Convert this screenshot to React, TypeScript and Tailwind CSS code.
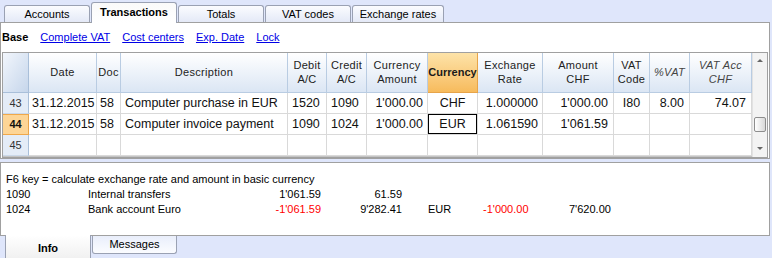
import React from 'react';

type Col = {
  w: number;
  head: string[];
  align: 'left' | 'right' | 'center';
  pad?: string;
  italic?: boolean;
  hot?: boolean;
};

const COLS: Col[] = [
  { w: 68, head: ['Date'], align: 'left', pad: 'pl-[3px]' },
  { w: 24, head: ['Doc'], align: 'left', pad: 'pl-[3px]' },
  { w: 167, head: ['Description'], align: 'left', pad: 'pl-[4px]' },
  { w: 39, head: ['Debit', 'A/C'], align: 'left', pad: 'pl-[4px]' },
  { w: 40, head: ['Credit', 'A/C'], align: 'left', pad: 'pl-[4px]' },
  { w: 61, head: ['Currency', 'Amount'], align: 'right', pad: 'pr-[4px]' },
  { w: 50, head: ['Currency'], align: 'center', hot: true },
  { w: 65, head: ['Exchange', 'Rate'], align: 'right', pad: 'pr-[4px]' },
  { w: 71, head: ['Amount', 'CHF'], align: 'right', pad: 'pr-[5px]' },
  { w: 36, head: ['VAT', 'Code'], align: 'center' },
  { w: 40, head: ['%VAT'], align: 'right', pad: 'pr-[5px]', italic: true },
  { w: 62, head: ['VAT Acc', 'CHF'], align: 'right', pad: 'pr-[5px]', italic: true },
];

const ROWS: { n: string; cur?: boolean; cells: string[] }[] = [
  { n: '43', cells: ['31.12.2015', '58', 'Computer purchase in EUR', '1520', '1090', "1'000.00", 'CHF', '1.000000', "1'000.00", 'I80', '8.00', '74.07'] },
  { n: '44', cur: true, cells: ['31.12.2015', '58', 'Computer invoice payment', '1090', '1024', "1'000.00", 'EUR', '1.061590', "1'061.59", '', '', ''] },
  { n: '45', cells: ['', '', '', '', '', '', '', '', '', '', '', ''] },
];

const TOP_TABS = ['Accounts', 'Transactions', 'Totals', 'VAT codes', 'Exchange rates'];

const alignClass = (a: Col['align']) =>
  a === 'left' ? 'justify-start' : a === 'right' ? 'justify-end' : 'justify-center';

function Scrollbar() {
  return (
    <div className="w-[15px] flex flex-col bg-[#f3f3f3] border-l border-[#e2e2e2]">
      <div className="h-[16px] flex items-center justify-center">
        <div className="w-0 h-0 border-x-[3px] border-x-transparent border-b-[3px] border-b-[#666]" />
      </div>
      <div className="h-[48px]" />
      <div className="h-[15px] mx-[1px] rounded-[2px] border border-[#8d8d8d] bg-gradient-to-r from-white to-[#d8d8d8]" />
      <div className="h-[10px]" />
      <div className="h-[14px] flex items-center justify-center">
        <div className="w-0 h-0 border-x-[3px] border-x-transparent border-t-[3px] border-t-[#666]" />
      </div>
    </div>
  );
}

function Table() {
  return (
    <div className="mx-px border border-[#a0a0a0] flex">
      <div className="flex flex-col border-b border-[#c4c4c4]">
        {/* header */}
        <div className="flex h-[40px]">
          <div className="w-[26px] border-r border-b border-[#a9bfd9] bg-gradient-to-br from-[#f2f6fc] to-[#c6d6eb]" />
          {COLS.map((c, i) => (
            <div
              key={i}
              style={{ width: c.w }}
              className={`shrink-0 overflow-hidden flex flex-col items-center justify-center text-center text-[11px] leading-[14px] tracking-[0.3px] whitespace-nowrap border-b ${
                c.hot
                  ? 'border-r border-[#e7a449] bg-gradient-to-b from-[#fde3a8] to-[#f7bb5c] font-bold text-[#1a1a1a] tracking-normal'
                  : 'border-r border-[#b9cce2] bg-gradient-to-b from-white to-[#dbe6f4] text-[#222]'
              } ${c.italic ? 'italic text-[#444]' : ''}`}
            >
              {c.head.map((h, j) => (
                <span key={j}>{h}</span>
              ))}
            </div>
          ))}
        </div>
        {/* body */}
        {ROWS.map((r) => (
          <div key={r.n} className="flex h-[21px]">
            <div
              className={`w-[26px] shrink-0 flex items-center justify-center text-[11px] border-r border-b ${
                r.cur
                  ? 'bg-[#fdd596] border-b-[#f0a84a] border-r-[#e9a449] font-bold text-[#111] border-t border-t-[#f0a84a]'
                  : 'bg-[#e4ecf7] border-r-[#a9bfd9] border-b-[#cbd8e8] text-[#333]'
              }`}
            >
              {r.n}
            </div>
            {COLS.map((c, i) => {
              const selected = r.cur && i === 6;
              return (
                <div
                  key={i}
                  style={{ width: c.w }}
                  className={`shrink-0 overflow-hidden whitespace-nowrap flex items-center text-[12.5px] text-[#111] border-r border-b border-[#d9d9d9] ${alignClass(
                    c.align,
                  )} ${c.pad ?? ''} ${selected ? 'shadow-[inset_0_0_0_1px_#000]' : ''}`}
                >
                  {r.cells[i]}
                </div>
              );
            })}
          </div>
        ))}
      </div>
      <Scrollbar />
    </div>
  );
}

function InfoLine({ cols }: { cols: { text: string; w?: number; right?: boolean; red?: boolean }[] }) {
  return (
    <div className="flex h-[15px] items-center whitespace-nowrap">
      {cols.map((c, i) => (
        <span
          key={i}
          style={c.w ? { width: c.w } : undefined}
          className={`shrink-0 ${c.right ? 'text-right' : ''} ${c.red ? 'text-[#ff0000]' : ''}`}
        >
          {c.text}
        </span>
      ))}
    </div>
  );
}

export default function App() {
  return (
    <div
      className="w-[772px] h-[258px] overflow-hidden bg-[#dfe6fb] flex flex-col text-black"
      style={{ fontFamily: '"Liberation Sans", Arial, sans-serif' }}
    >
      {/* top tabs */}
      <div className="h-[22px] flex items-end pl-[4px] gap-px">
        {TOP_TABS.map((t) => {
          const active = t === 'Transactions';
          return (
            <div
              key={t}
              className={`relative flex items-center justify-center text-[11px] border border-b-0 border-[#9aa1b3] rounded-t-[3px] ${
                t === 'Exchange rates' ? 'w-[92px]' : 'w-[86px]'
              } ${
                active
                  ? 'h-[21px] -mb-px z-10 bg-gradient-to-b from-[#fafafa] to-white font-bold pb-[2px]'
                  : 'h-[17px] pt-px bg-gradient-to-b from-[#fbfcff] to-[#e4e9f7]'
              }`}
            >
              {t}
            </div>
          );
        })}
      </div>

      {/* main panel */}
      <div className="h-[138px] mr-[2px] border border-[#a0a0a0] bg-white flex flex-col">
        <div className="h-[29px] flex items-center gap-[12px] px-[1px] text-[11px]">
          <span className="font-bold">Base</span>
          <span className="text-[#0000e6] underline">Complete VAT</span>
          <span className="text-[#0000e6] underline">Cost centers</span>
          <span className="text-[#0000e6] underline">Exp. Date</span>
          <span className="text-[#0000e6] underline">Lock</span>
        </div>
        <Table />
      </div>

      <div className="h-[3px]" />

      {/* info panel */}
      <div className="h-[74px] mr-[2px] border border-[#a0a0a0] bg-white pt-[8px] pl-[5px] text-[11px]">
        <InfoLine cols={[{ text: 'F6 key = calculate exchange rate and amount in basic currency' }]} />
        <InfoLine
          cols={[
            { text: '1090', w: 82 },
            { text: 'Internal transfers', w: 160 },
            { text: "1'061.59", w: 73, right: true },
            { text: '61.59', w: 81, right: true },
          ]}
        />
        <InfoLine
          cols={[
            { text: '1024', w: 82 },
            { text: 'Bank account Euro', w: 160 },
            { text: "-1'061.59", w: 73, right: true, red: true },
            { text: "9'282.41", w: 81, right: true },
            { text: '', w: 26 },
            { text: 'EUR', w: 55 },
            { text: "-1'000.00", w: 86, red: true },
            { text: "7'620.00" },
          ]}
        />
      </div>

      {/* bottom tabs */}
      <div className="flex-1 flex items-start pl-[5px] gap-px">
        <div className="relative -mt-px z-10 w-[86px] h-[23px] bg-gradient-to-b from-white to-[#f1f1f1] border-x border-[#9aa1b3] flex items-center justify-center pt-[4px] text-[11px] font-bold">
          Info
        </div>
        <div className="w-[85px] h-[18px] border border-t-0 border-[#9aa1b3] rounded-b-[3px] bg-gradient-to-b from-[#e9eefb] to-[#fbfcff] flex items-center justify-center text-[11px]">
          Messages
        </div>
      </div>
    </div>
  );
}
